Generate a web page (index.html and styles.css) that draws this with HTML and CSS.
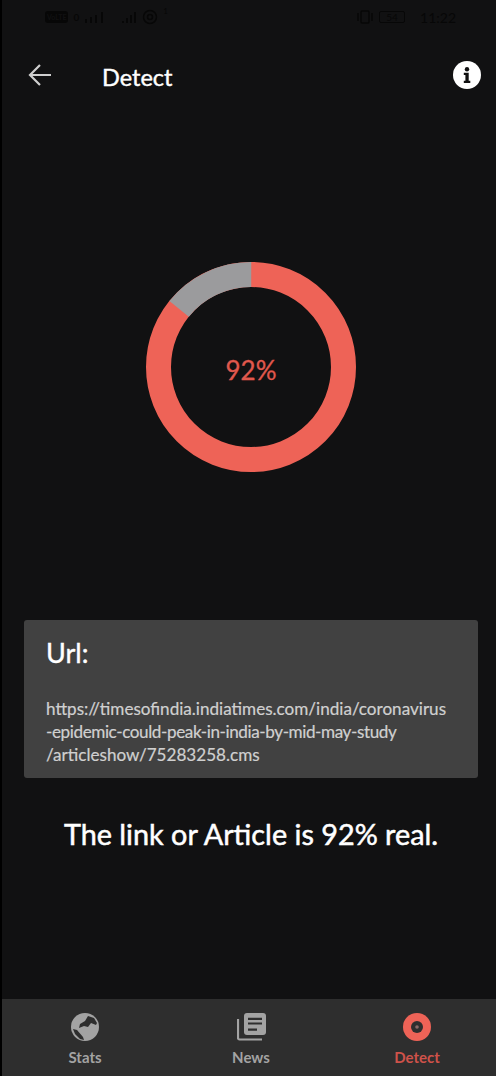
FILE: index.html
```html
<!DOCTYPE html>
<html lang="en">
<head>
    <meta charset="UTF-8">
    <meta name="viewport" content="width=device-width, initial-scale=1.0">
    <title>Detect</title>
    <link rel="stylesheet" href="styles.css">
</head>
<body>
    <div class="app">
        <div class="status-bar">
            <div class="status-group">
                <span class="status-hd">VoLTE</span>
                <span class="status-zero">0</span>
                <svg class="status-icon" width="53" height="14" viewBox="0 0 53 14">
                    <path d="M2 9v4M7 7v6M12 5v8M18 2v11M39 11v2M43 8v5M47 5v8M51 2v11" stroke="#070707" stroke-width="2" fill="none"/>
                </svg>
                <svg class="status-icon" width="16" height="16" viewBox="0 0 16 16">
                    <circle cx="8" cy="8" r="6.5" stroke="#070707" stroke-width="1.5" fill="none"/>
                    <circle cx="8" cy="8" r="2.5" stroke="#070707" stroke-width="1.5" fill="none"/>
                </svg>
                <span class="status-sup">1</span>
            </div>
            <div class="status-group">
                <svg class="status-icon" width="18" height="14" viewBox="0 0 18 14">
                    <rect x="5" y="1" width="8" height="12" rx="1" stroke="#070707" stroke-width="1.5" fill="none"/>
                    <path d="M2 3v8M16 3v8" stroke="#070707" stroke-width="1.5"/>
                </svg>
                <span class="status-battery">54</span>
                <span class="status-time">11:22</span>
            </div>
        </div>

        <header class="top-bar">
            <svg class="back-icon" width="24" height="24" viewBox="0 0 24 24">
                <path d="M23 12H2M12 2L2 12l10 10" stroke="#cfcfcf" stroke-width="2.2" fill="none"/>
            </svg>
            <h1 class="title">Detect</h1>
            <svg class="info-icon" width="28" height="28" viewBox="0 0 28 28">
                <circle cx="14" cy="14" r="14" fill="#fff"/>
                <circle cx="14" cy="8.2" r="2.2" fill="#111"/>
                <path d="M10.8 11.8h4.9v8h1.6v2.2h-6.5v-2.2h1.6v-5.8h-1.6z" fill="#111"/>
            </svg>
        </header>

        <main class="content">
            <div class="gauge">
                <svg width="210" height="210" viewBox="0 0 210 210">
                    <circle cx="105" cy="105" r="92.5" fill="none" stroke="#ee6357" stroke-width="25"/>
                    <circle cx="105" cy="105" r="92.5" fill="none" stroke="#9b9b9d" stroke-width="25"
                        stroke-dasharray="82.4 581.2" transform="rotate(-141 105 105)"/>
                </svg>
                <span class="gauge-value">92%</span>
            </div>

            <section class="url-card">
                <h2 class="url-label">Url:</h2>
                <p class="url-text">https://timesofindia.indiatimes.com/india/coronavirus<br><span class="url-tight">-epidemic-could-peak-in-india-by-mid-may-study</span><br>/articleshow/75283258.cms</p>
            </section>

            <p class="verdict">The link or Article is 92% real.</p>
        </main>

        <nav class="tabs">
            <div class="tab">
                <svg width="28" height="28" viewBox="0 0 28 28">
                    <circle cx="14" cy="14" r="14" fill="#a3a3a3"/>
                    <path d="M17 3l6 2 3 5-1 2-5-2-3 4-4-1-5 2 1-4 5-3z" fill="#2e2e2e"/>
                    <path d="M2 16l4 1 6 7 1 3-4-1-5-5z" fill="#2e2e2e"/>
                </svg>
                <span>Stats</span>
            </div>
            <div class="tab">
                <svg width="29" height="28" viewBox="0 0 29 28">
                    <rect x="7" y="0" width="22" height="22" rx="3" fill="#a3a3a3"/>
                    <path d="M11 4.7h14v2.2H11zM11 9.4h14v2.2H11zM11 15.4h9v2.4h-9z" fill="#2e2e2e"/>
                    <path d="M1 6v19a1.5 1.5 0 0 0 1.5 1.5H25" stroke="#a3a3a3" stroke-width="2.2" fill="none"/>
                </svg>
                <span>News</span>
            </div>
            <div class="tab tab-active">
                <svg width="28" height="28" viewBox="0 0 28 28">
                    <circle cx="14" cy="14" r="14" fill="#ee6357"/>
                    <circle cx="14" cy="14" r="6" fill="#2e2e2e"/>
                    <circle cx="14" cy="14" r="1.8" fill="#8a6a68"/>
                </svg>
                <span>Detect</span>
            </div>
        </nav>
    </div>
</body>
</html>
```

FILE: styles.css
```css
* {
    box-sizing: border-box;
}
body {
    margin: 0;
    background-color: #000;
    font-family: Lato, "Open Sans", sans-serif;
    color: #fff;
}
.app {
    height: 1076px;
    margin-left: 2px;
    background-color: #111112;
    display: flex;
    flex-direction: column;
    overflow: hidden;
}
.status-bar {
    height: 46px;
    padding: 9px 40px 0 43px;
    display: flex;
    justify-content: space-between;
    align-items: flex-start;
    color: #070707;
    font-size: 13px;
}
.status-group {
    display: flex;
    align-items: center;
    height: 16px;
    gap: 5px;
}
.status-hd {
    background-color: #070707;
    color: #111112;
    font-size: 7px;
    font-weight: 700;
    padding: 2px;
    border-radius: 3px;
}
.status-zero {
    font-size: 10px;
    font-weight: 700;
}
.status-sup {
    font-size: 8px;
    margin-bottom: 12px;
}
.status-battery {
    border: 1px solid #070707;
    width: 26px;
    text-align: center;
    font-size: 10px;
    line-height: 10px;
    border-radius: 2px;
    margin-right: 10px;
}
.status-time {
    font-size: 14px;
}
.top-bar {
    height: 58px;
    padding: 0 15px 0 26px;
    display: flex;
    align-items: center;
}
.back-icon {
    flex: none;
}
.title {
    flex: 1;
    margin: 0 0 0 50px;
    padding-top: 4px;
    font-size: 23.5px;
    font-weight: 400;
    -webkit-text-stroke: 0.4px #fff;
}
.content {
    flex: 1;
    padding-left: 4px;
    display: flex;
    flex-direction: column;
    align-items: center;
}
.gauge {
    margin-top: 158px;
    width: 210px;
    height: 210px;
    display: flex;
    align-items: center;
    justify-content: center;
    position: relative;
}
.gauge svg {
    position: absolute;
    top: 0;
    left: 0;
}
.gauge-value {
    padding-top: 6px;
    color: #e0584d;
    font-size: 26px;
    -webkit-text-stroke: 0.3px #e0584d;
}
.url-card {
    flex: none;
    margin-top: 148px;
    width: 454px;
    height: 158px;
    padding: 17px 22px;
    background-color: #414141;
    border-radius: 3px;
}
.url-label {
    margin: 0;
    font-size: 27px;
    font-weight: 400;
    line-height: 32px;
    -webkit-text-stroke: 0.4px #fff;
}
.url-text {
    margin: 28px 0 0;
    font-size: 17.1px;
    line-height: 23px;
    white-space: nowrap;
    color: #d0d0d0;
    -webkit-text-stroke: 0.2px #d0d0d0;
}
.url-tight {
    letter-spacing: -0.4px;
}
.verdict {
    margin: 39px 0 0;
    font-size: 28.8px;
    -webkit-text-stroke: 0.5px #fff;
}
.tabs {
    height: 77px;
    background-color: #2e2e2e;
    display: grid;
    grid-template-columns: repeat(3, 166px);
    padding-top: 14px;
}
.tab {
    display: flex;
    flex-direction: column;
    align-items: center;
    gap: 7px;
    font-size: 15px;
    line-height: 18px;
    font-weight: 700;
    color: #a3a3a3;
}
.tab-active {
    color: #cf524a;
}
```
